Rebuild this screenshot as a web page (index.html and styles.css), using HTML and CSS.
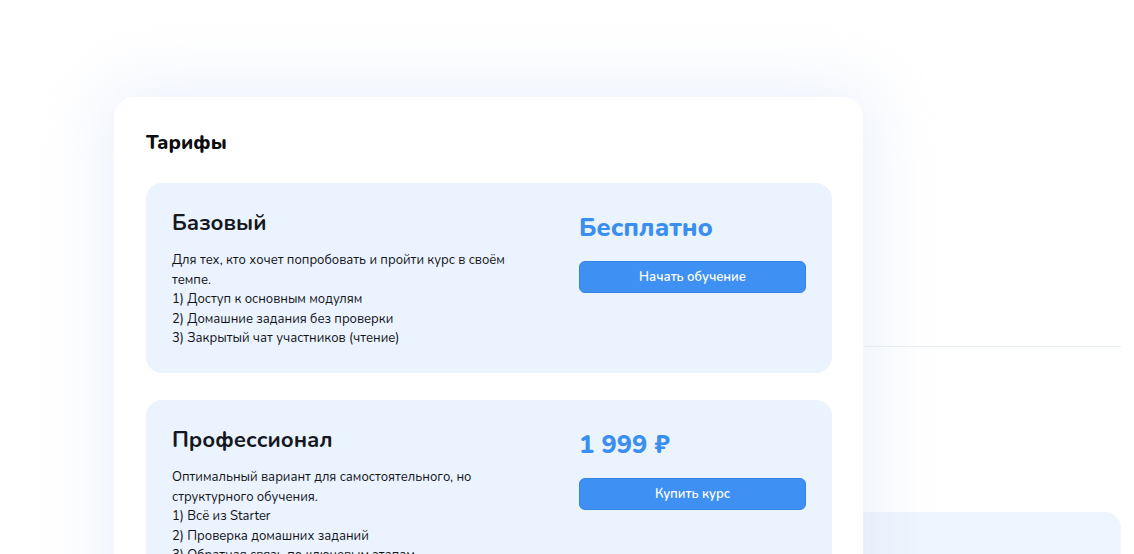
FILE: index.html
```html
<!DOCTYPE html>
<html lang="ru">
  <head>
    <meta charset="utf-8" />
    <title>Тарифы</title>
    <link rel="stylesheet" href="styles.css">
  </head>
  <body>

<div class="stage">

  <section class="pricing">
    <h2 class="pricing-title">Тарифы</h2>

    <div class="plan">
      <div class="plan-info">
        <h3 class="plan-name">Базовый</h3>
        <p class="plan-text">Для тех, кто хочет попробовать и пройти курс в своём темпе.<br>
        1) Доступ к основным модулям<br>
        2) Домашние задания без проверки<br>
        3) Закрытый чат участников (чтение)</p>
      </div>
      <div class="plan-buy">
        <div class="plan-price">Бесплатно</div>
        <button class="plan-btn">Начать обучение</button>
      </div>
    </div>

    <div class="plan">
      <div class="plan-info">
        <h3 class="plan-name">Профессионал</h3>
        <p class="plan-text">Оптимальный вариант для самостоятельного, но структурного обучения.<br>
        1) Всё из Starter<br>
        2) Проверка домашних заданий<br>
        3) Обратная связь по ключевым этапам</p>
      </div>
      <div class="plan-buy">
        <div class="plan-price">1 999 ₽</div>
        <button class="plan-btn">Купить курс</button>
      </div>
    </div>
  </section>

  <!-- side column peeking from behind the pricing card -->
  <aside class="side">
    <div class="side-top"></div>
    <div class="side-mid"></div>
    <div class="side-box"></div>
  </aside>

</div>

  </body>
</html>
```

FILE: styles.css
```css
html, body{
	margin: 0;
	background: #fff;
	height: 100%;
	overflow: hidden;
}

body{
	font-family: "Nunito", "Lato", "Noto Sans", sans-serif;
	color: #16181d;
}

.stage{
	display: flex;
	align-items: flex-start;
	padding-top: 97px;
	padding-left: 114px;
}

.pricing{
	position: relative;
	z-index: 2;
	width: 749px;
	flex-shrink: 0;
	box-sizing: border-box;
	background: #fff;
	border-radius: 20px;
	padding: 32px 31px 40px 32px;
	box-shadow: 0 0 60px 14px rgba(214, 226, 246, 0.45);
}

.pricing-title{
	margin: 0 0 26px 0;
	font-size: 20px;
	line-height: 28px;
	font-weight: 800;
	color: #0c0d10;
}

.plan{
	display: grid;
	grid-template-columns: 1fr 227px;
	column-gap: 40px;
	background: #eaf3fe;
	border-radius: 16px;
	padding: 25px 26px 24px 26px;
	margin-bottom: 27px;
}

.plan-name{
	margin: 0 0 13px 0;
	font-size: 22px;
	line-height: 30px;
	font-weight: 700;
	color: #15181e;
}

.plan-text{
	margin: 0;
	font-size: 13px;
	line-height: 19.6px;
	color: #111216;
	max-width: 350px;
}

.plan-price{
	margin-top: 4px;
	font-size: 25.5px;
	line-height: 32px;
	font-weight: 800;
	color: #3a8ef0;
}

.plan-btn{
	display: block;
	width: 100%;
	height: 32px;
	margin-top: 17px;
	border: 1px solid #3583e6;
	border-radius: 6px;
	background: #3e90f3;
	color: #fff;
	font-family: inherit;
	font-size: 13px;
	font-weight: 600;
	cursor: pointer;
}

.side{
	width: 258px;
	margin-top: 124px;
	flex-shrink: 0;
}

.side-top{
	height: 125px;
	background: #fff;
	border-top-right-radius: 16px;
	border-bottom: 1px solid #e9eff6;
}

.side-mid{
	height: 165px;
	background: #fff;
}

.side-box{
	height: 120px;
	background: #eef5fe;
	border-top-right-radius: 16px;
}
```
